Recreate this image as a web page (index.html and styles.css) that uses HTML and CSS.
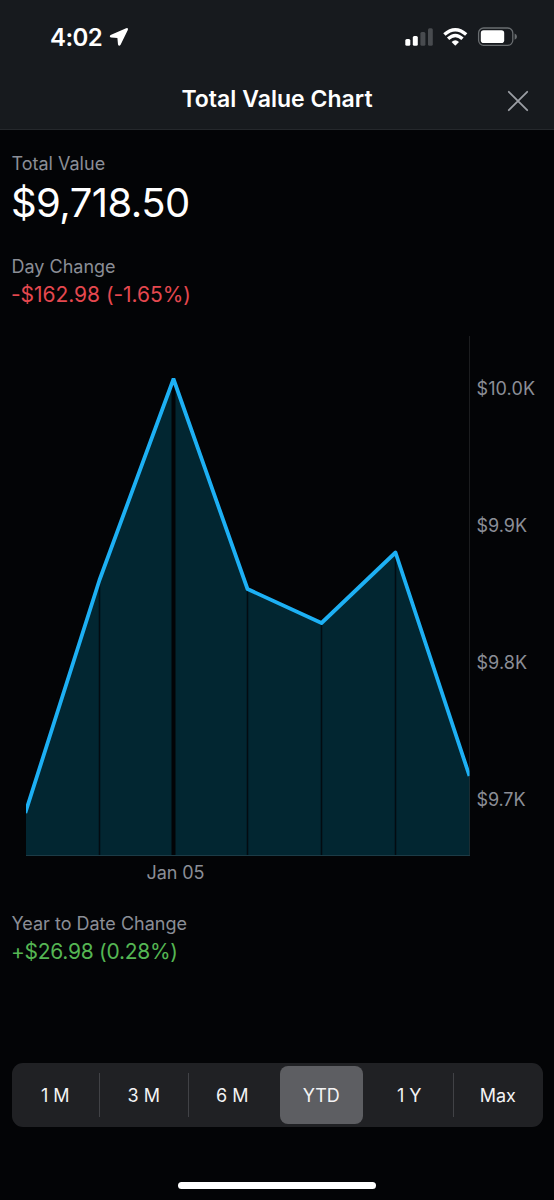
FILE: index.html
```html
<!DOCTYPE html>
<html lang="en">
<head>
<meta charset="utf-8">
<title>Total Value Chart</title>
<link rel="stylesheet" href="styles.css">
</head>
<body>
<div class="screen">
  <header class="header">
    <div class="status">
      <span class="time">4:02</span>
      <svg class="location" width="20" height="20" viewBox="0 0 20 20"><path d="M17.1 1.2 1.6 7.9Q-.2 9.6 2 10.4L8.4 11 9 17.4Q10 19.8 11.6 17.7L18.8 3Q19.4.4 17.1 1.2Z"/></svg>
      <svg class="indicators" width="114" height="22" viewBox="0 0 114 22">
        <g fill="#fff"><rect x="0.3" y="12" width="5" height="6.8" rx="1.5"/><rect x="7.8" y="8.9" width="5" height="9.9" rx="1.5"/></g>
        <g fill="#484b4f"><rect x="15.4" y="5" width="5" height="13.8" rx="1.5"/><rect x="23" y="1.2" width="4.8" height="17.6" rx="1.5"/></g>
        <g fill="none" stroke="#fff" stroke-width="3.4"><path d="M39.4 7.6Q50.3-2.2 61.2 7.6"/><path d="M43.1 11.8Q50.3 5.2 57.5 11.8"/></g>
        <path fill="#fff" d="M46.6 14.9Q50.3 11.6 54 14.9L50.8 18.2Q50.3 18.7 49.8 18.2Z"/>
        <rect x="73.6" y="1" width="34.2" height="17.3" rx="5" fill="none" stroke="#696d70" stroke-width="1.3"/>
        <rect x="75.8" y="3.2" width="23.4" height="12.9" rx="2.8" fill="#fff"/>
        <path fill="#696d70" d="M109.6 6.6Q112 7.5 112 9.7T109.6 12.8Z"/>
      </svg>
    </div>
    <div class="titlebar">
      <h1 class="title">Total Value Chart</h1>
      <svg class="close" width="22" height="22" viewBox="0 0 22 22"><path d="M1.8 1.8 20.2 20.2M20.2 1.8 1.8 20.2"/></svg>
    </div>
  </header>
  <main class="content">
    <div class="label total-label">Total Value</div>
    <div class="total">$9,718.50</div>
    <div class="label day-label">Day Change</div>
    <div class="change negative">-$162.98 (-1.65%)</div>
    <svg class="chart" width="554" height="560" viewBox="0 330 554 560">
      <path class="area" d="M26 811 99.5 580 173.5 379 247.5 589 321.5 623 395.5 552.5 469.5 774V856H26Z"/>
      <path class="separator" d="M99.5 580V855M247.5 589V855M321.5 623V855M395.5 552V855"/>
      <path class="separator major" d="M173.5 379V856"/>
      <path class="axis" d="M469.5 336V856"/>
      <path class="baseline" d="M26 855.5H470"/>
      <clipPath id="plot"><rect x="26" y="378" width="443.5" height="478"/></clipPath>
      <path class="line" clip-path="url(#plot)" d="M25.3 813 99.5 580 173.5 379 247.5 589 321.5 623 395.5 552.5 469.5 776"/>
      <g class="ticks">
        <text x="476.5" y="395" textLength="58.5">$10.0K</text>
        <text x="476.5" y="532" textLength="50.5">$9.9K</text>
        <text x="476.5" y="669" textLength="50.5">$9.8K</text>
        <text x="476.5" y="805.5" textLength="49">$9.7K</text>
        <text x="146.5" y="879.3" textLength="58">Jan 05</text>
      </g>
    </svg>
    <div class="label ytd-label">Year to Date Change</div>
    <div class="change positive">+$26.98 (0.28%)</div>
  </main>
  <nav class="ranges">
    <button class="range">1 M</button>
    <button class="range divided">3 M</button>
    <button class="range divided">6 M</button>
    <button class="range selected">YTD</button>
    <button class="range">1 Y</button>
    <button class="range divided">Max</button>
  </nav>
  <div class="home"></div>
</div>
</body>
</html>
```
FILE: styles.css
```css
* { box-sizing: border-box; }
body { margin: 0; background: #030406; }
.screen {
  width: 554px; height: 1200px; display: flex; flex-direction: column;
  font-family: Inter, "Liberation Sans", sans-serif; color: #fff;
  background: #030406; overflow: hidden;
}
.header { height: 130px; background: #171a1e; border-bottom: 1px solid #25282c; flex: none; }
.status { height: 70px; padding: 22px 35px 0 50px; display: flex; align-items: flex-start; }
.time { font-size: 24px; line-height: 32px; font-weight: 600; letter-spacing: -0.55px; width: 59px; white-space: nowrap; }
.location { margin-top: 5px; fill: #fff; }
.indicators { margin: 5px 0 0 auto; }
.titlebar { height: 58px; display: grid; grid-template-columns: 40px 1fr 40px; align-items: center; padding-right: 8px; padding-left: 8px; }
.title { grid-column: 2; margin: 0; text-align: center; font-size: 23px; line-height: 30px; font-weight: 600; letter-spacing: 0.03px; }
.close { margin: 3px 0 0 1px; stroke: #9b9ea4; stroke-width: 1.8; stroke-linecap: round; fill: none; }
.content { padding-top: 22px; display: flex; flex-direction: column; height: 933px; flex: none; }
.label { padding-left: 11.5px; font-size: 18px; line-height: 24px; color: #8b8e96; }
.total { padding-left: 11px; margin-top: 3px; font-size: 40px; line-height: 48px; letter-spacing: -0.55px; }
.day-label { margin-top: 28px; }
.change { padding-left: 11px; margin-top: 2px; font-size: 21px; line-height: 28px; }
.negative { color: #e5484f; letter-spacing: -0.05px; }
.positive { color: #55b653; letter-spacing: -0.28px; }
.chart { display: block; margin-top: 21px; flex: none; }
.ytd-label { margin-top: 22px; }
.area { fill: #022631; }
.separator { stroke: #030b11; stroke-width: 1.5; }
.major { stroke: #020407; stroke-width: 4; }
.axis { stroke: #fff; stroke-opacity: 0.1; }
.baseline { stroke: #1c3b46; }
.line { fill: none; stroke: #1db0f4; stroke-width: 3.8; stroke-linejoin: round; }
.ticks { font-size: 18px; fill: #8b8e96; }
.ranges {
  flex: none; height: 64px; margin: 0 11.5px; padding: 3px 0; border-radius: 11px;
  background: #202124; display: grid; grid-template-columns: repeat(6, 1fr); align-items: center;
}
.range {
  height: 44px; margin: 0; padding: 2px 1px 0 0; border: 0; background: none; color: #f3f3f4;
  font-family: inherit; font-size: 18px; line-height: 24px; text-align: center;
}
.divided { border-left: 1px solid #414246; margin-left: -1px; }
.selected { height: 58px; margin: 0 3px; padding-right: 0; background: #5d5e62; border-radius: 8px; }
.home { width: 198px; height: 7px; margin: 54.5px auto 0; border-radius: 4px; background: #fff; flex: none; }
```
